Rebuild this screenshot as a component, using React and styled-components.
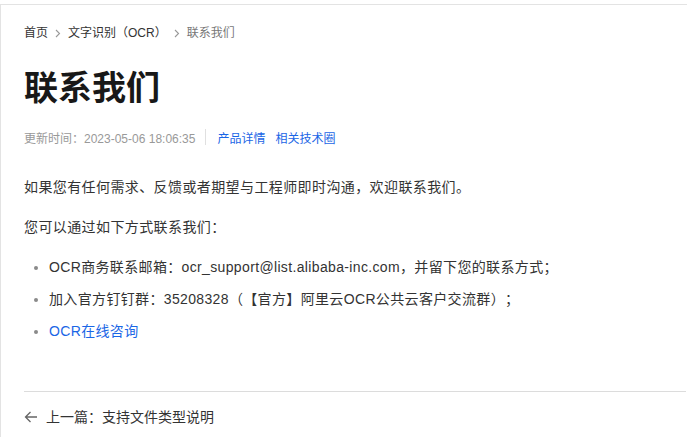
import React from "react";
import styled, { createGlobalStyle } from "styled-components";

const Global = createGlobalStyle`
  html, body { margin: 0; padding: 0; background: #fff; }
  body {
    font-family: "Liberation Sans", "Noto Sans CJK SC", sans-serif;
    color: #333;
    text-spacing-trim: space-all;
  }
  * { box-sizing: border-box; }
`;

const Page = styled.div`
  margin-top: 4px;
  border-top: 1px solid #e3e3e3;
  border-left: 1px solid #e3e3e3;
  min-height: 433px;
  padding: 18px 1px 0 23px;
`;

const Breadcrumb = styled.nav`
  display: flex;
  align-items: center;
  height: 20px;
  font-size: 12px;
`;

const Crumb = styled.a`
  color: ${(p) => (p.$current ? "#777" : "#333")};
  text-decoration: none;
  line-height: 20px;
`;

const Sep = styled.span`
  display: inline-flex;
  align-items: center;
  justify-content: center;
  width: 20px;
  color: #999;
`;

const Title = styled.h1`
  margin: 21px 0 0;
  font-size: 34px;
  line-height: 48px;
  font-weight: 700;
  color: #181818;
`;

const Meta = styled.div`
  margin-top: 15px;
  display: flex;
  align-items: center;
  height: 20px;
  font-size: 12px;
  color: #999;
`;

const Divider = styled.span`
  width: 1px;
  height: 16px;
  background: #e0e0e0;
  margin: 0 11px 0 10px;
`;

const MetaLink = styled.a`
  color: #1a66e6;
  text-decoration: none;
  margin-right: ${(p) => p.$gap || 0}px;
`;

const Para = styled.p`
  margin: ${(p) => p.$top}px 0 0;
  font-size: 14px;
  line-height: 22px;
  letter-spacing: 0.4px;
  color: #333;
`;

const List = styled.ul`
  margin: 18px 0 0;
  padding: 0;
  list-style: none;
  display: flex;
  flex-direction: column;
  gap: 10px;
`;

const Item = styled.li`
  position: relative;
  padding-left: 25px;
  font-size: 14px;
  line-height: 22px;
  letter-spacing: 0.35px;
  color: #333;
  &::before {
    content: "";
    position: absolute;
    left: 10px;
    top: 10px;
    width: 4px;
    height: 4px;
    border-radius: 50%;
    background: #8a8a8a;
  }
`;

const Link = styled.a`
  color: #1a66e6;
  text-decoration: none;
`;

const Rule = styled.hr`
  margin: 49px 0 0;
  border: 0;
  border-top: 1px solid #dcdcdc;
  height: 0;
`;

const Prev = styled.a`
  margin-top: 15px;
  display: flex;
  align-items: center;
  gap: 8px;
  font-size: 14px;
  line-height: 20px;
  color: #333;
  text-decoration: none;
`;

const Chevron = () => (
  <svg width="6" height="9" viewBox="0 0 6 9" fill="none">
    <path d="M1 1l3.5 3.5L1 8" stroke="#999" strokeWidth="1.1" />
  </svg>
);

const ArrowLeft = () => (
  <svg width="14" height="12" viewBox="0 0 14 12" fill="none">
    <path d="M13 6H1.5M6.5 1L1.5 6l5 5" stroke="#666" strokeWidth="1.3" />
  </svg>
);

export default function App() {
  return (
    <>
      <Global />
      <Page>
        <Breadcrumb>
          <Crumb>首页</Crumb>
          <Sep><Chevron /></Sep>
          <Crumb>文字识别（OCR）</Crumb>
          <Sep><Chevron /></Sep>
          <Crumb $current>联系我们</Crumb>
        </Breadcrumb>
        <Title>联系我们</Title>
        <Meta>
          <span>更新时间：2023-05-06 18:06:35</span>
          <Divider />
          <MetaLink $gap={10}>产品详情</MetaLink>
          <MetaLink>相关技术圈</MetaLink>
        </Meta>
        <Para $top={29}>如果您有任何需求、反馈或者期望与工程师即时沟通，欢迎联系我们。</Para>
        <Para $top={18}>您可以通过如下方式联系我们：</Para>
        <List>
          <Item>OCR商务联系邮箱：ocr_support@list.alibaba-inc.com，并留下您的联系方式；</Item>
          <Item>加入官方钉钉群：35208328（【官方】阿里云OCR公共云客户交流群）；</Item>
          <Item><Link>OCR在线咨询</Link></Item>
        </List>
        <Rule />
        <Prev>
          <ArrowLeft />
          <span>上一篇：支持文件类型说明</span>
        </Prev>
      </Page>
    </>
  );
}
